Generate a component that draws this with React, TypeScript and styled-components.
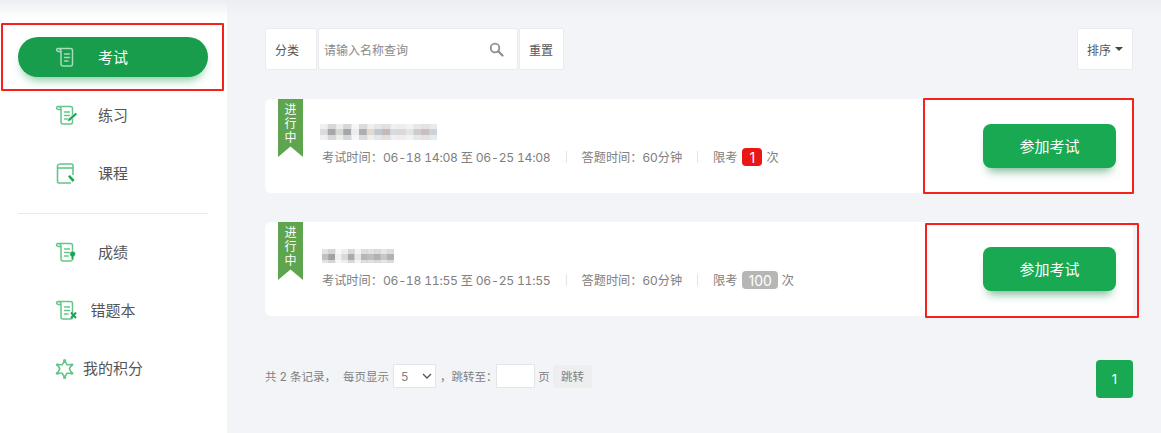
import React from "react";
import styled, { createGlobalStyle } from "styled-components";

const Global = createGlobalStyle`
  html, body { margin: 0; padding: 0; background: #f3f4f7; overflow: hidden; }
  * { box-sizing: border-box; }
  body { font-family: Inter, "Noto Sans CJK SC", sans-serif; }
`;

const Page = styled.div`
  position: relative;
  display: flex;
  width: 1161px;
  height: 433px;
  overflow: hidden;
  &::before {
    content: "";
    position: absolute;
    left: 0;
    right: 0;
    top: 0;
    height: 18px;
    background: linear-gradient(to bottom, #eceef1, rgba(240, 241, 244, 0));
    pointer-events: none;
    z-index: 1;
  }
`;

const Sidebar = styled.aside`
  width: 227px;
  flex: none;
  background: #fff;
  padding: 28px 19px 0 18px;
  display: flex;
  flex-direction: column;
`;

const NavRow = styled.div<{ $active?: boolean }>`
  height: 40px;
  margin: 9px 0;
  padding-left: 38px;
  display: flex;
  align-items: center;
  border-radius: 20px;
  color: ${(p) => (p.$active ? "#fff" : "#555")};
  background: ${(p) => (p.$active ? "#179d4c" : "transparent")};
  box-shadow: ${(p) => (p.$active ? "0 7px 10px -4px rgba(23,157,76,.55)" : "none")};
`;

const NavIcon = styled.svg`
  width: 24px;
  height: 24px;
  flex: none;
  margin-left: -2px;
  margin-right: -2px;
`;

const NavLabel = styled.span`
  width: 74px;
  padding-bottom: 2px;
  text-align: center;
  font-size: 15px;
  white-space: nowrap;
`;

const NavDivider = styled.div`
  height: 1px;
  background: #e9e9ec;
  margin: 11px 0 9px;
`;

const Main = styled.main`
  flex: 1;
  padding: 28px 28px 0 38px;
  display: flex;
  flex-direction: column;
`;

const Toolbar = styled.div`
  display: flex;
  gap: 1px;
  height: 42px;
  margin-bottom: 29px;
`;

const ToolButton = styled.div<{ $w: number; $push?: boolean }>`
  width: ${(p) => p.$w}px;
  margin-left: ${(p) => (p.$push ? "auto" : "0")};
  padding: 0 0 0 9px;
  background: #fff;
  border: 1px solid #eaebee;
  border-radius: 2px;
  display: flex;
  align-items: center;
  font-size: 12px;
  color: #555;
  gap: 4px;
`;

const SearchBox = styled.div`
  width: 200px;
  background: #fff;
  border: 1px solid #eaebee;
  border-radius: 2px;
  display: flex;
  align-items: center;
  justify-content: space-between;
  padding: 0 13px 0 5px;
  font-size: 12px;
  color: #8a8a8a;
`;

const Caret = styled.i`
  width: 0;
  height: 0;
  border-left: 4px solid transparent;
  border-right: 4px solid transparent;
  border-top: 4px solid #444;
`;

const Card = styled.section`
  position: relative;
  height: 94px;
  margin-bottom: 29px;
  background: #fff;
  border-radius: 6px;
  padding: 24px 17px 0 57px;
  display: flex;
  align-items: flex-start;
  justify-content: space-between;
`;

const Ribbon = styled.div`
  position: absolute;
  left: 13px;
  top: 0;
  width: 25px;
  height: 58px;
  padding-top: 4px;
  background: #5fa550;
  clip-path: polygon(0 0, 100% 0, 100% 100%, 50% 82%, 0 100%);
  color: #fff;
  font-size: 12px;
  line-height: 14px;
  text-align: center;
`;

const CardBody = styled.div`
  display: flex;
  flex-direction: column;
`;

const Mosaic = styled.svg<{ $shift: number }>`
  display: block;
  margin-left: ${(p) => p.$shift}px;
  margin-bottom: 7px;
  height: 18px;
`;

const Meta = styled.div`
  display: flex;
  align-items: center;
  font-size: 12.2px;
  color: #808080;
  height: 18px;
  white-space: nowrap;
`;

const Range = styled.span`
  font-variant-numeric: tabular-nums;
  letter-spacing: -0.26px;
  white-space: pre;
`;

const MetaDivider = styled.span`
  width: 1px;
  height: 12px;
  background: #e4e4e4;
  margin: 0 15px;
`;

const Badge = styled.span<{ $red?: boolean }>`
  min-width: 20px;
  height: 18px;
  margin: 0 4px 0 5px;
  padding: 0 6px;
  border-radius: 4px;
  display: inline-flex;
  align-items: center;
  justify-content: center;
  font-size: 14px;
  color: #fff;
  background: ${(p) => (p.$red ? "#ea1717" : "#b6b6b6")};
`;

const JoinButton = styled.div`
  width: 133px;
  height: 44px;
  margin-top: 1px;
  padding-bottom: 2px;
  border-radius: 8px;
  background: #18a952;
  color: #fff;
  font-size: 15px;
  display: flex;
  align-items: center;
  justify-content: center;
  box-shadow: 0 8px 10px -5px rgba(24, 130, 70, 0.6);
`;

const Pager = styled.footer`
  margin-top: 15px;
  display: flex;
  align-items: flex-start;
  height: 38px;
  font-size: 11.5px;
  color: #808080;
  white-space: nowrap;
`;

const PagerControls = styled.div`
  margin-top: 4px;
  height: 24px;
  display: flex;
  align-items: center;
`;

const PagerText = styled.span<{ $w: number }>`
  width: ${(p) => p.$w}px;
  flex: none;
`;

const SizeSelect = styled.div`
  width: 43px;
  height: 24px;
  background: #fff;
  border: 1px solid #e4e5e8;
  display: flex;
  align-items: center;
  justify-content: space-between;
  padding: 0 3px 0 7px;
  font-size: 12px;
  margin: 0 4px;
  flex: none;
`;

const JumpInput = styled.div`
  width: 39px;
  height: 24px;
  background: #fff;
  border: 1px solid #e4e5e8;
  flex: none;
`;

const JumpButton = styled.div`
  width: 39px;
  height: 23px;
  margin-left: 4px;
  background: #eeeeee;
  border-radius: 3px;
  display: flex;
  align-items: center;
  justify-content: center;
  flex: none;
`;

const PageNum = styled.div`
  margin-left: auto;
  width: 37px;
  height: 38px;
  border-radius: 4px;
  background: #18a952;
  color: #fff;
  font-size: 13px;
  display: flex;
  align-items: center;
  justify-content: center;
`;

const Annotation = styled.div<{ $x: number; $y: number; $w: number; $h: number }>`
  position: absolute;
  left: ${(p) => p.$x}px;
  top: ${(p) => p.$y}px;
  width: ${(p) => p.$w}px;
  height: ${(p) => p.$h}px;
  border: 2px solid #f5221b;
  border-radius: 1px;
  z-index: 2;
`;

type Kind = "exam" | "practice" | "course" | "score" | "wrong" | "star";

const Icon = ({ kind, active }: { kind: Kind; active?: boolean }) => {
  const light = active ? "#a6dcba" : "#63c68a";
  const dark = active ? "#d7f0df" : "#19a650";
  const scroll = (
    <g fill="none" stroke={light} strokeWidth="1.500" strokeLinecap="round" strokeLinejoin="round">
      <path d="M3.500 3.500h13a2 2 0 0 1 2 2V19a2 2 0 0 1-2 2H9a2 2 0 0 1-2-2V6C7 4.500 5.500 3.400 3.800 3.500 2.400 3.600 2.200 5.600 3.400 6.200 4.200 6.600 5.500 6.700 7 6.700" />
      <path d="M10.500 9h5M10.500 12.500h5M10.500 16h3.500" />
    </g>
  );
  return (
    <NavIcon viewBox="0 0 24 24">
      {kind === "exam" && scroll}
      {kind === "practice" && (
        <>
          {scroll}
          <path d="M14 16l7.500-6.500 1.800 1.800-7 6.500-3 .7z" fill={dark} stroke="#fff" strokeWidth=".6" />
        </>
      )}
      {kind === "course" && (
        <>
          <g fill="none" stroke={light} strokeWidth="1.600" strokeLinejoin="round">
            <path d="M17 22H5a1.500 1.500 0 0 1-1.500-1.500V5A2.500 2.500 0 0 1 6 3h11.500A1.500 1.500 0 0 1 19 4.500V14" />
            <path d="M3.500 7H19" />
          </g>
          <path d="M14 15.500l1.800-1.500 4.700 5-1.800 2z" fill={dark} />
        </>
      )}
      {kind === "score" && (
        <>
          {scroll}
          <path d="M18.500 11a3 3 0 0 1 3 3c0 1.200-.7 2.100-1.700 2.600V20h-2.600v-3.400a3 3 0 0 1 1.300-5.600z" fill={dark} stroke="#fff" strokeWidth=".6" />
        </>
      )}
      {kind === "wrong" && (
        <>
          {scroll}
          <path d="M17 14.500l5 5.500M22 14.500L17 20" stroke={dark} strokeWidth="1.900" />
        </>
      )}
      {kind === "star" && (
        <g transform="translate(1 2.200) scale(.8)" fill="none" stroke={light} strokeWidth="2" strokeLinejoin="round">
          <path d="M12 3l3 5.200 6 0-3 5 3 5.600-6 0-3 5.200-3-5.200-6 0 3-5.600-3-5 6 0z" />
          <g fill={light} stroke="none">
            <circle cx="12" cy="3" r="2" />
            <circle cx="21" cy="8.200" r="2" />
            <circle cx="21" cy="18.800" r="2" />
            <circle cx="12" cy="24" r="2" />
            <circle cx="3" cy="18.800" r="2" />
            <circle cx="3" cy="8.200" r="2" />
          </g>
        </g>
      )}
    </NavIcon>
  );
};

const SearchIcon = () => (
  <svg width="15" height="15" viewBox="0 0 15 15" fill="none" stroke="#8f8f8f">
    <circle cx="6" cy="6" r="4.300" strokeWidth="1.800" />
    <path d="M9.300 9.300L13.500 13.500" strokeWidth="2.200" strokeLinecap="round" />
  </svg>
);

const Chevron = () => (
  <svg width="10" height="6" viewBox="0 0 10 6" fill="none" stroke="#555" strokeWidth="1.300">
    <path d="M1 1l4 4 4-4" />
  </svg>
);

const mosaic1 = ["#dcdcde","#a6a7ab","#d4d8d4","#a4a6aa","#ececec","#abafb4","#e0dad2","#c1c7d0","#c4b9b6","#d6dbe0","#dcd8d6","#e3e4e8","#cfcccc","#c8bfbf","#ccd2da"];
const mosaic2 = ["#c0c0c0","#a2a2a2","#f0f0f0","#d8d8d8","#aaaaaa","#e6e6e6","#b6b6b6","#bebebe","#aeb2b6","#cac6c6","#b2b2b2"];

const Blurred = ({ cells, cw, shift, top }: { cells: string[]; cw: number; shift: number; top: number }) => {
  const w = cells.length * cw;
  return (
    <Mosaic $shift={shift} width={w} viewBox={`0 0 ${w} 18`}>
      <defs>
        <filter id={`b${cells.length}`} x="-5%" y="-20%" width="110%" height="140%">
          <feGaussianBlur stdDeviation="0.600" />
        </filter>
      </defs>
      <g filter={`url(#b${cells.length})`}>
        {cells.map((c, i) => (
          <g key={i}>
            <rect x={i * cw} y={top} width={cw + 0.5} height={17 - top} fill={c} opacity={0.45} />
            <rect x={i * cw} y={top + 5} width={cw + 0.5} height={6} fill={c} />
          </g>
        ))}
      </g>
    </Mosaic>
  );
};

const nav: { kind: Kind; label: string; active?: boolean }[] = [
  { kind: "exam", label: "考试", active: true },
  { kind: "practice", label: "练习" },
  { kind: "course", label: "课程" },
];
const nav2: { kind: Kind; label: string }[] = [
  { kind: "score", label: "成绩" },
  { kind: "wrong", label: "错题本" },
  { kind: "star", label: "我的积分" },
];

const exams = [
  { cells: mosaic1, cw: 7.800, shift: -2, top: 1, range: "06-18 14:08 至 06-25 14:08", limit: "1", red: true },
  { cells: mosaic2, cw: 6.500, shift: 0, top: 3, range: "06-18 11:55 至 06-25 11:55", limit: "100", red: false },
];

export default function App() {
  return (
    <Page>
      <Global />
      <Sidebar>
        {nav.map((n) => (
          <NavRow key={n.label} $active={n.active}>
            <Icon kind={n.kind} active={n.active} />
            <NavLabel>{n.label}</NavLabel>
          </NavRow>
        ))}
        <NavDivider />
        {nav2.map((n) => (
          <NavRow key={n.label}>
            <Icon kind={n.kind} />
            <NavLabel>{n.label}</NavLabel>
          </NavRow>
        ))}
      </Sidebar>
      <Main>
        <Toolbar>
          <ToolButton $w={52}>分类</ToolButton>
          <SearchBox>
            请输入名称查询
            <SearchIcon />
          </SearchBox>
          <ToolButton $w={45}>重置</ToolButton>
          <ToolButton $w={56} $push>
            排序
            <Caret />
          </ToolButton>
        </Toolbar>
        {exams.map((e) => (
          <Card key={e.range}>
            <Ribbon>
              进<br />行<br />中
            </Ribbon>
            <CardBody>
              <Blurred cells={e.cells} cw={e.cw} shift={e.shift} top={e.top} />
              <Meta>
                考试时间：<Range>{e.range}</Range>
                <MetaDivider />
                答题时间：60分钟
                <MetaDivider />
                限考
                <Badge $red={e.red}>{e.limit}</Badge>次
              </Meta>
            </CardBody>
            <JoinButton>参加考试</JoinButton>
          </Card>
        ))}
        <Pager>
          <PagerControls>
            <PagerText $w={78}>共 2 条记录，</PagerText>
            <span>每页显示</span>
            <SizeSelect>
              5
              <Chevron />
            </SizeSelect>
            <PagerText $w={56}>，跳转至：</PagerText>
            <JumpInput />
            <PagerText $w={14}>&nbsp;页</PagerText>
            <JumpButton>跳转</JumpButton>
          </PagerControls>
          <PageNum>1</PageNum>
        </Pager>
      </Main>
      <Annotation $x={1} $y={23} $w={223} $h={68} />
      <Annotation $x={923} $y={98} $w={211} $h={96} />
      <Annotation $x={925} $y={223} $w={214} $h={95} />
    </Page>
  );
}
